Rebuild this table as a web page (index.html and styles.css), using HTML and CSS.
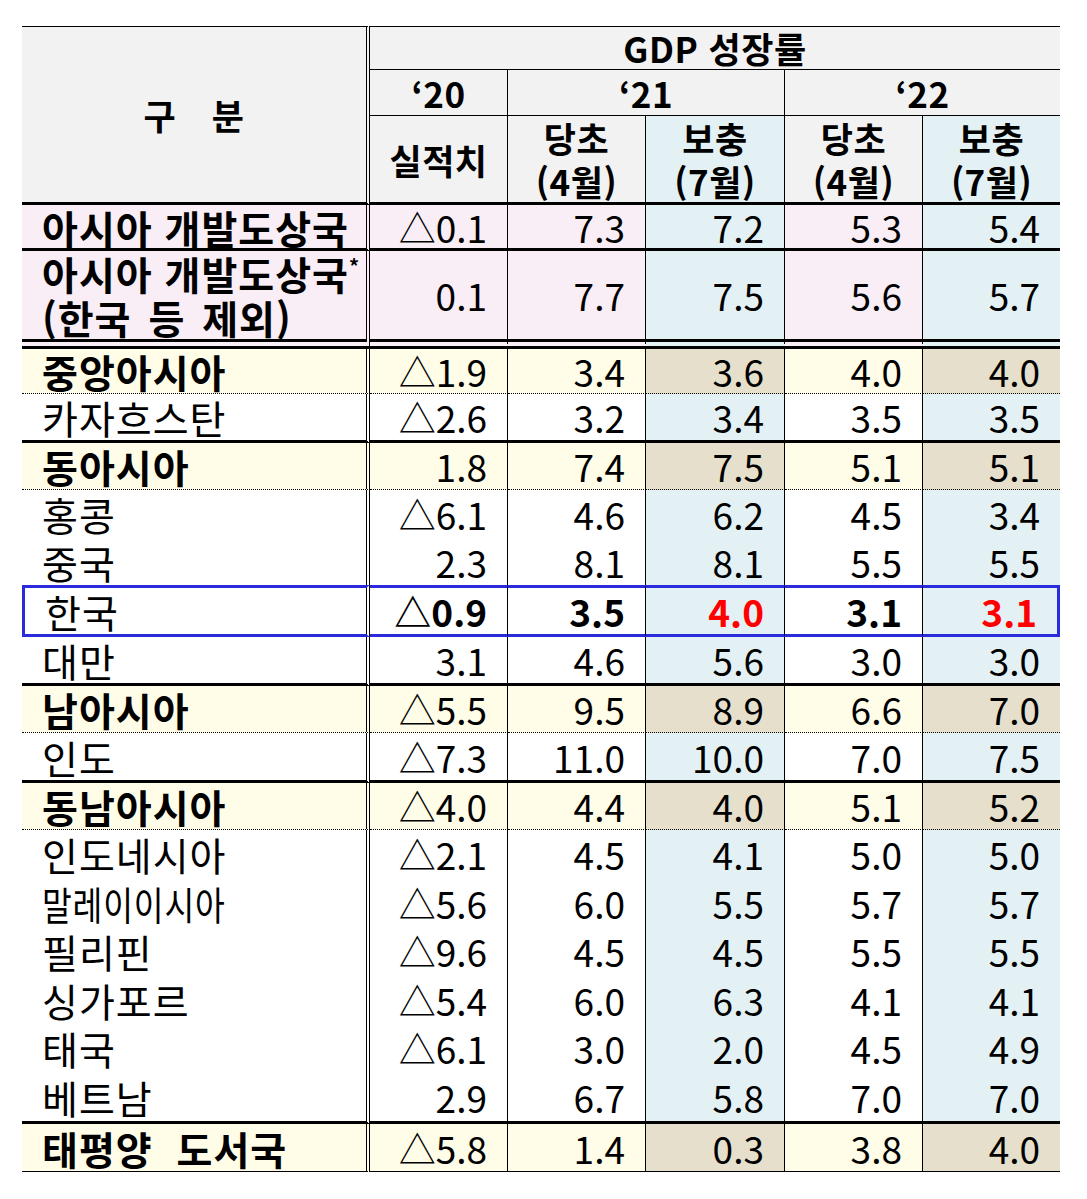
FILE: index.html
```html
<!DOCTYPE html>
<html lang="ko">
<head>
<meta charset="utf-8">
<title>GDP 성장률</title>
<link rel="stylesheet" href="styles.css">
</head>
<body>
<table class="gdp">
  <colgroup>
    <col class="c-name">
    <col class="c-20">
    <col class="c-a">
    <col class="c-b">
    <col class="c-a">
    <col class="c-b2">
  </colgroup>
  <thead>
    <tr class="h1">
      <th class="name-head" rowspan="3">구&emsp;분</th>
      <th colspan="5" class="gdp-head">GDP 성장률</th>
    </tr>
    <tr class="h2">
      <th>‘20</th>
      <th colspan="2">‘21</th>
      <th colspan="2">‘22</th>
    </tr>
    <tr class="h3">
      <th>실적치</th>
      <th>당초<br>(4월)</th>
      <th class="b">보충<br>(7월)</th>
      <th>당초<br>(4월)</th>
      <th class="b">보충<br>(7월)</th>
    </tr>
  </thead>
  <tbody>
    <tr class="pink r46 thick">
      <td class="name bold">아시아 개발도상국</td><td>△0.1</td><td>7.3</td><td class="b">7.2</td><td>5.3</td><td class="b">5.4</td>
    </tr>
    <tr class="pink r98 dbl">
      <td class="name bold two">아시아 개발도상국<sup>*</sup><br><span class="wide-sm">(한국 등 제외)</span></td><td>0.1</td><td>7.7</td><td class="b">7.5</td><td>5.6</td><td class="b">5.7</td>
    </tr>
    <tr class="region r45 dot">
      <td class="name bold">중앙아시아</td><td>△1.9</td><td>3.4</td><td class="b">3.6</td><td>4.0</td><td class="b">4.0</td>
    </tr>
    <tr class="plain r49 thick">
      <td class="name">카자흐스탄</td><td>△2.6</td><td>3.2</td><td class="b">3.4</td><td>3.5</td><td class="b">3.5</td>
    </tr>
    <tr class="region r47 dot">
      <td class="name bold">동아시아</td><td>1.8</td><td>7.4</td><td class="b">7.5</td><td>5.1</td><td class="b">5.1</td>
    </tr>
    <tr class="plain r48">
      <td class="name">홍콩</td><td>△6.1</td><td>4.6</td><td class="b">6.2</td><td>4.5</td><td class="b">3.4</td>
    </tr>
    <tr class="plain r47">
      <td class="name">중국</td><td>2.3</td><td>8.1</td><td class="b">8.1</td><td>5.5</td><td class="b">5.5</td>
    </tr>
    <tr class="plain korea r52">
      <td class="name">한국</td><td class="bold">△0.9</td><td class="bold">3.5</td><td class="b bold red">4.0</td><td class="bold">3.1</td><td class="b bold red">3.1</td>
    </tr>
    <tr class="plain r49 thick">
      <td class="name">대만</td><td>3.1</td><td>4.6</td><td class="b">5.6</td><td>3.0</td><td class="b">3.0</td>
    </tr>
    <tr class="region r47 dot">
      <td class="name bold">남아시아</td><td>△5.5</td><td>9.5</td><td class="b">8.9</td><td>6.6</td><td class="b">7.0</td>
    </tr>
    <tr class="plain r50 thick">
      <td class="name">인도</td><td>△7.3</td><td>11.0</td><td class="b">10.0</td><td>7.0</td><td class="b">7.5</td>
    </tr>
    <tr class="region r47 dot">
      <td class="name bold">동남아시아</td><td>△4.0</td><td>4.4</td><td class="b">4.0</td><td>5.1</td><td class="b">5.2</td>
    </tr>
    <tr class="plain r48">
      <td class="name">인도네시아</td><td>△2.1</td><td>4.5</td><td class="b">4.1</td><td>5.0</td><td class="b">5.0</td>
    </tr>
    <tr class="plain r49">
      <td class="name"><span class="condensed">말레이이시아</span></td><td>△5.6</td><td>6.0</td><td class="b">5.5</td><td>5.7</td><td class="b">5.7</td>
    </tr>
    <tr class="plain r48">
      <td class="name">필리핀</td><td>△9.6</td><td>4.5</td><td class="b">4.5</td><td>5.5</td><td class="b">5.5</td>
    </tr>
    <tr class="plain r49">
      <td class="name">싱가포르</td><td>△5.4</td><td>6.0</td><td class="b">6.3</td><td>4.1</td><td class="b">4.1</td>
    </tr>
    <tr class="plain r48">
      <td class="name">태국</td><td>△6.1</td><td>3.0</td><td class="b">2.0</td><td>4.5</td><td class="b">4.9</td>
    </tr>
    <tr class="plain r52 thick">
      <td class="name">베트남</td><td>2.9</td><td>6.7</td><td class="b">5.8</td><td>7.0</td><td class="b">7.0</td>
    </tr>
    <tr class="region r48 last">
      <td class="name bold wide">태평양 도서국</td><td>△5.8</td><td>1.4</td><td class="b">0.3</td><td>3.8</td><td class="b">4.0</td>
    </tr>
  </tbody>
</table>
</body>
</html>
```

FILE: styles.css
```css
html, body {
  margin: 0;
  padding: 0;
  background: #ffffff;
}

body {
  font-family: "Noto Sans CJK KR", "Noto Sans", sans-serif;
  color: #000000;
}

.gdp {
  margin: 26px 0 0 22px;
  width: 1038px;
  table-layout: fixed;
  border-collapse: separate;
  border-spacing: 0;
}

.c-name { width: 348px; }
.c-20 { width: 138px; }
.c-a { width: 138px; }
.c-b { width: 139px; }
.c-b2 { width: 137px; }

.gdp th,
.gdp td {
  box-sizing: border-box;
  padding: 0;
  border-right: 1px solid #000;
  vertical-align: middle;
}

.gdp tr > :last-child {
  border-right: 0;
}

/* header */
.gdp th {
  background: #f2f2f2;
  font-size: 35px;
  font-weight: 700;
  letter-spacing: 0.5px;
  text-align: center;
  line-height: 38px;
}

.gdp th.b {
  background: #e4f1f4;
}

.gdp th.name-head {
  border-right: 4px double #000;
  border-top: 1px solid #000;
  border-bottom: 3px solid #000;
}

.h1 th {
  height: 44px;
  border-top: 1px solid #000;
  border-bottom: 1px solid #000;
}

.h2 th {
  height: 46px;
  border-bottom: 1px solid #000;
}

.h3 th {
  height: 87px;
  border-bottom: 3px solid #000;
  line-height: 43px;
}

/* body */
.gdp td {
  font-size: 37px;
  line-height: 40px;
  text-align: right;
  padding-right: 20px;
  white-space: nowrap;
}

.gdp td.name {
  text-align: left;
  padding-left: 20px;
  padding-right: 0;
  font-size: 39px;
  letter-spacing: 1px;
  border-right: 4px double #000;
}

.condensed {
  display: inline-block;
  transform: scaleX(0.83);
  transform-origin: left center;
}

.gdp td.wide {
  word-spacing: 12px;
}

.wide-sm {
  word-spacing: 5px;
}

.gdp td.two {
  line-height: 44px;
}

.gdp td.two sup {
  font-size: 20px;
  line-height: 0;
  vertical-align: 16px;
}

.bold { font-weight: 700; }
.red { color: #ff0000; }

.pink td { background: #f9edf6; }
.pink td.b { background: #e4f1f4; }
.region td { background: #fffde8; }
.region td.b { background: #e5dfcb; }
.plain td { background: #ffffff; }
.plain td.b { background: #e4f1f4; }

.thick td { border-bottom: 3px solid #000; }
.dot td { border-bottom: 1px dotted #000; }
.dbl td { border-bottom: 10px double #000; }
.last td { border-bottom: 1px solid #000; }

.korea td {
  border-top: 3px solid #2b2bdb;
  border-bottom: 3px solid #2b2bdb;
}
.korea td:first-child { border-left: 3px solid #2b2bdb; }
.korea td:last-child { border-right: 3px solid #2b2bdb; }

.r45 td { height: 45px; }
.r46 td { height: 46px; }
.r47 td { height: 47px; }
.r48 td { height: 48px; }
.r49 td { height: 49px; }
.r50 td { height: 50px; }
.r52 td { height: 52px; }
.r98 td { height: 98px; }
```
